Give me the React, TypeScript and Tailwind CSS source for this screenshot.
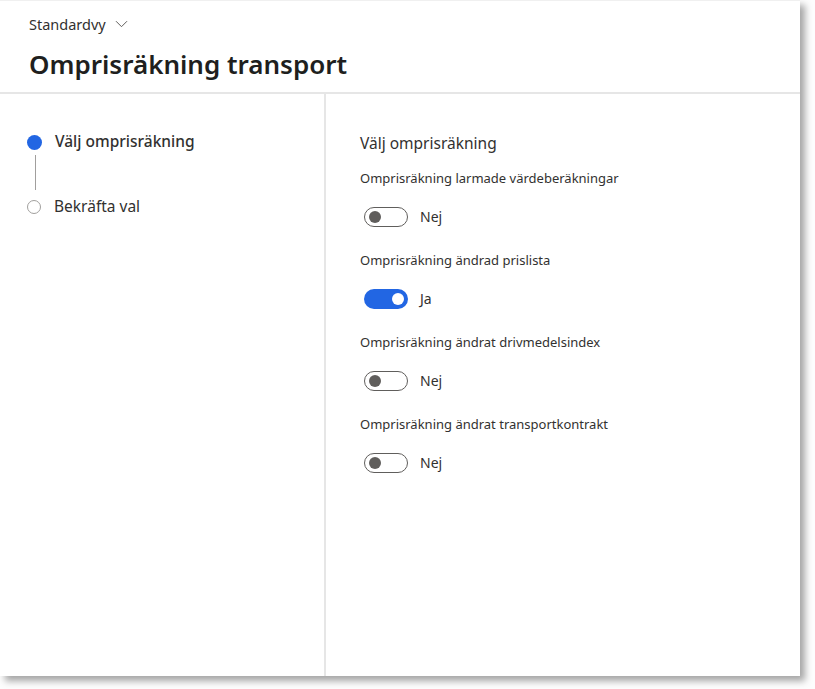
import React from 'react'

const FONT = { fontFamily: '"Noto Sans", "Open Sans", sans-serif' }

const options = [
  { label: 'Omprisräkning larmade värdeberäkningar', on: false },
  { label: 'Omprisräkning ändrad prislista', on: true },
  { label: 'Omprisräkning ändrat drivmedelsindex', on: false },
  { label: 'Omprisräkning ändrat transportkontrakt', on: false },
]

function Toggle({ on }: { on: boolean }) {
  if (on) {
    return (
      <div className="flex h-5 w-11 items-center justify-end rounded-full bg-[#2266e3] pr-[4px]">
        <div className="h-3 w-3 rounded-full bg-white" />
      </div>
    )
  }
  return (
    <div className="flex h-5 w-11 items-center rounded-full border border-[#605e5c] bg-white pl-[4px]">
      <div className="h-3 w-3 rounded-full bg-[#605e5c]" />
    </div>
  )
}

export default function App() {
  return (
    <div className="min-h-screen bg-[#fdfdfd] text-[#323130]" style={FONT}>
      <div className="flex h-[676px] w-[800px] flex-col border-t border-[#f0f0f0] bg-white shadow-[5px_5px_7px_rgba(0,0,0,0.35)]">
        {/* header */}
        <div className="border-b-2 border-[#e6e6e6] pb-[12px] pl-[29px] pt-[14px]">
          <div className="flex items-center gap-[9px] text-[14.5px] leading-[18px] text-[#323130]">
            <span>Standardvy</span>
            <svg width="13" height="8" viewBox="0 0 13 8" fill="none">
              <path d="M1 1.2l5.5 5.5L12 1.2" stroke="#605e5c" strokeWidth="1" />
            </svg>
          </div>
          <h1 className="mt-[15px] text-[26px] font-semibold leading-[32px] text-[#201f1e]">
            Omprisräkning transport
          </h1>
        </div>

        <div className="flex flex-1">
          {/* steps */}
          <div className="w-[326px] border-r-2 border-[#e6e6e6] pl-[27px] pt-[38px]">
            <div className="flex h-5 items-center gap-[13px]">
              <div className="h-[15px] w-[15px] rounded-full bg-[#2266e3]" />
              <span className="text-[15.5px] font-medium text-[#323130]">Välj omprisräkning</span>
            </div>
            <div className="ml-[8px] mt-[3px] h-[35px] w-px bg-[#a19f9d]" />
            <div className="mt-[7px] flex h-5 items-center gap-[13px]">
              <div className="h-[14px] w-[14px] rounded-full border border-[#a19f9d] bg-white" />
              <span className="text-[15.5px] text-[#323130]">Bekräfta val</span>
            </div>
          </div>

          {/* options */}
          <div className="flex-1 pl-[34px] pt-[39px]">
            <div className="text-[15.5px] leading-5 text-[#323130]">Välj omprisräkning</div>
            <div className="mt-[17px] flex flex-col">
              {options.map(o => (
                <div key={o.label} className="flex h-[82px] flex-col">
                  <div className="text-[13px] leading-4 text-[#323130]">{o.label}</div>
                  <div className="ml-1 mt-[21px] flex items-center gap-3">
                    <Toggle on={o.on} />
                    <span className="text-[14px] leading-5 text-[#323130]">{o.on ? 'Ja' : 'Nej'}</span>
                  </div>
                </div>
              ))}
            </div>
          </div>
        </div>
      </div>
    </div>
  )
}
